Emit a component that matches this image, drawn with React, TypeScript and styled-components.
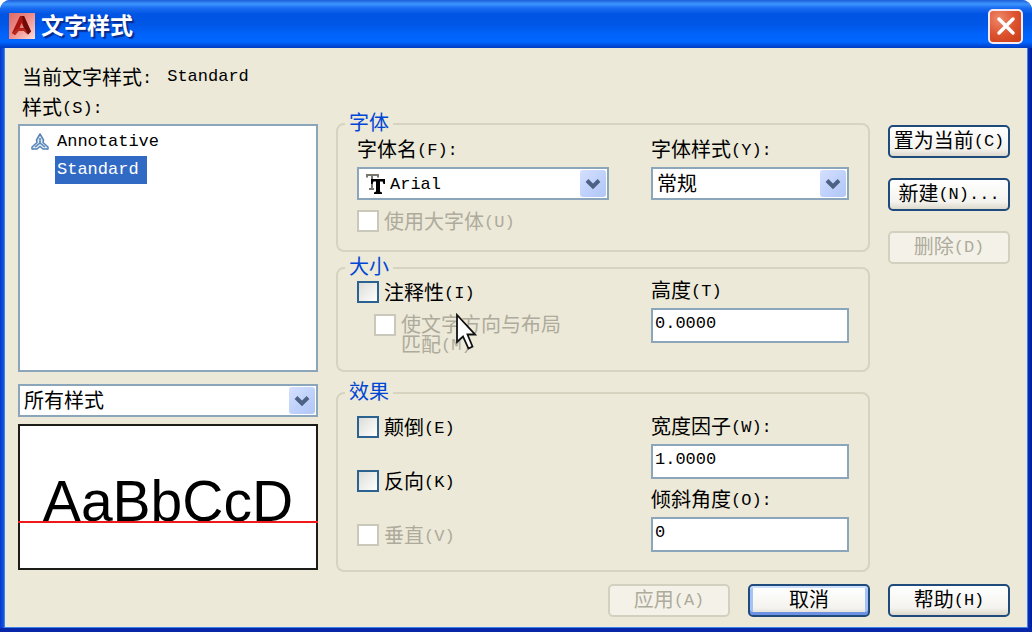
import React from "react";
import styled, { createGlobalStyle, css } from "styled-components";

const cjk = `"Noto Sans CJK SC", sans-serif`;
const mono = `"Liberation Mono", "Noto Sans CJK SC", monospace`;

const GlobalStyle = createGlobalStyle`
  *, *::before, *::after { box-sizing: border-box; }
  body { margin: 0; background: #fff; color: #000; font: 20px/20px ${cjk}; }
  button, input, select { font: inherit; color: inherit; margin: 0; }
`;

const Window = styled.main`
  display: flex;
  flex-direction: column;
  min-height: 100vh;
  padding: 0 4px 4px;
  border-radius: 10px 10px 0 0;
  background: linear-gradient(90deg, #0636cc, #1258e4 4px, #1258e4 calc(100% - 5px), #0a2fc0 calc(100% - 4px), #001a96);
  box-shadow: inset 0 -4px 0 #0826a8;
`;

const TitleBar = styled.header`
  display: flex;
  align-items: center;
  gap: 6px;
  height: 48px;
  margin: 0 -4px;
  padding: 4px 9px 0;
  border-radius: 10px 10px 0 0;
  background: linear-gradient(
    #1c5ed8 0, #3d95ff 4px, #1a6cf0 8px, #0054e3 14px, #0056e6 24px,
    #0062fa 34px, #0066ff 42px, #0050e0 45px, #003cc0 48px
  );
`;

const Title = styled.h1`
  flex: 1;
  margin: 0;
  color: #fff;
  font-size: 23px;
  line-height: 24px;
  padding-bottom: 4px;
  font-weight: 700;
  text-shadow: 2px 2px 1px #0a2a8c;
`;

const CloseButton = styled.button`
  display: grid;
  place-items: center;
  width: 35px;
  height: 35px;
  padding: 0;
  border: 2px solid #f4ebf4;
  border-radius: 5px;
  background: radial-gradient(circle at 30% 25%, #ee8a6c, #de5330 50%, #c63c14);
`;

const Body = styled.form`
  flex: 1;
  display: flex;
  flex-direction: column;
  padding: 14px 17px 10px 13px;
  border: solid #3b82ea;
  border-width: 0 1px 1px;
  background: #ece9d8;
`;

const Current = styled.p`
  display: flex;
  gap: 15px;
  margin: 0;
  padding-left: 4px;
  line-height: 30px;
`;

const Latin = styled.span`
  font-family: ${mono};
  font-size: 17px;
  line-height: 0;
  vertical-align: 2px;
`;

const CurrentName = styled.span`
  font-family: ${mono};
  font-size: 17px;
`;

const Columns = styled.div`
  display: grid;
  grid-template-columns: 300px minmax(0, 1fr) 122px;
  column-gap: 18px;
`;

const StyleColumn = styled.section`
  display: flex;
  flex-direction: column;
`;

const ListCaption = styled.h2`
  margin: 0 0 2px;
  padding-left: 4px;
  font-size: 20px;
  font-weight: 400;
  line-height: 30px;
`;

const field = css`
  border: 2px solid #8ba5bb;
  background: #fff;
`;

const StyleList = styled.ul`
  ${field}
  height: 248px;
  margin: 0 0 12px;
  padding: 2px 11px;
  list-style: none;
`;

const StyleItem = styled.li`
  display: grid;
  grid-template-columns: 20px auto;
  justify-content: start;
  align-items: center;
  column-gap: 4px;
  height: 28px;
`;

const StyleName = styled.button<{ $selected?: boolean }>`
  grid-column: 2;
  height: 28px;
  padding: 0 8px 0 2px;
  border: 0;
  font-family: ${mono};
  font-size: 17px;
  background: ${(p) => (p.$selected ? "#316ac5" : "transparent")};
  color: ${(p) => (p.$selected ? "#fff" : "#000")};
`;

const Combo = styled.div`
  ${field}
  position: relative;
  display: flex;
  align-items: center;
  gap: 5px;
  height: 33px;
  padding-left: 4px;
`;

const ComboSelect = styled.select<{ $latin?: boolean }>`
  flex: 1;
  min-width: 0;
  height: 29px;
  padding: ${(p) => (p.$latin ? "2px 30px 0 0" : "0 30px 2px 0")};
  border: 0;
  outline: 0;
  appearance: none;
  background: transparent;
  font-family: ${(p) => (p.$latin ? mono : cjk)};
  font-size: ${(p) => (p.$latin ? "17px" : "20px")};
`;

const Arrow = styled.span`
  position: absolute;
  top: 1px;
  right: 1px;
  display: grid;
  place-items: center;
  width: 26px;
  height: 27px;
  border-radius: 3px;
  background: linear-gradient(135deg, #d5e0fd, #bdd0fb 60%, #b2c6f5);
  pointer-events: none;
`;

const Preview = styled.div`
  position: relative;
  height: 146px;
  margin-top: 7px;
  padding-top: 47px;
  border: 2px solid #1c1c18;
  background: #fff;
  font: 57px/57px "Liberation Sans", Arial, sans-serif;
  font-kerning: none;
  text-align: center;
`;

const Baseline = styled.span`
  position: absolute;
  top: 95px;
  left: -2px;
  right: -2px;
  height: 2px;
  background: #f01818;
`;

const Groups = styled.div`
  display: flex;
  flex-direction: column;
  padding-top: 20px;
`;

const Group = styled.fieldset<{ $top: number; $bottom: number; $gap: number }>`
  min-width: 0;
  margin: 0 0 ${(p) => p.$gap}px;
  padding: ${(p) => p.$top}px 19px ${(p) => p.$bottom}px;
  border: 2px solid #d6d4c0;
  border-radius: 8px;
`;

const Legend = styled.legend`
  margin-left: -12px;
  padding: 0 4px 4px;
  color: #0046d5;
`;

const Split = styled.div`
  display: grid;
  grid-template-columns: minmax(0, 1fr) 198px;
  column-gap: 42px;
`;

const Stack = styled.div<{ $gap: number; $top?: number }>`
  display: flex;
  flex-direction: column;
  gap: ${(p) => p.$gap}px;
  padding-top: ${(p) => p.$top ?? 0}px;
`;

const Field = styled.div`
  display: flex;
  flex-direction: column;
  gap: 8px;
`;

const TextInput = styled.input`
  ${field}
  width: 100%;
  height: 35px;
  padding: 0 2px 4px;
  font-family: ${mono};
  font-size: 17px;
`;

const CheckLabel = styled.label<{ $off?: boolean; $nested?: boolean }>`
  position: relative;
  display: flex;
  gap: 5px;
  padding-left: ${(p) => (p.$nested ? 17 : 0)}px;
  line-height: ${(p) => (p.$nested ? 20 : 22)}px;
  color: ${(p) => (p.$off ? "#aeab9c" : "#000")};
`;

const Check = styled.input.attrs({ type: "checkbox" })`
  flex: none;
  appearance: none;
  width: 22px;
  height: 22px;
  border: 2px solid #2c628f;
  background: linear-gradient(135deg, #dcdcd7, #fff);

  &:disabled {
    border-color: #cac8bb;
    background: #fff;
  }
`;

const Pointer = styled.svg`
  position: absolute;
  left: 98px;
  top: -1px;
`;

const Actions = styled.div`
  display: flex;
  flex-direction: column;
  gap: 20px;
  padding-top: 33px;
`;

const Footer = styled.footer`
  display: flex;
  justify-content: flex-end;
  gap: 18px;
  margin-top: 12px;
`;

const PushButton = styled.button<{ $primary?: boolean }>`
  width: 122px;
  height: 33px;
  padding: 0 0 3px;
  border: 2px solid #1f4a7c;
  border-radius: 5px;
  background: linear-gradient(#fff, #f4f3ee 75%, #dcd8cc);
  white-space: nowrap;
  box-shadow: ${(p) => (p.$primary ? "inset 0 2px #cfe0fd, inset 0 -3px #6d92e4, inset 3px 0 #a5c1f5, inset -3px 0 #a5c1f5" : "none")};

  &:disabled {
    border-color: #d2d0bf;
    background: #f4f2e8;
    color: #aeab9c;
  }
`;

function Chevron() {
  return (
    <Arrow aria-hidden="true">
      <svg width="16" height="12" viewBox="0 0 16 12" fill="none" stroke="#4d6185" strokeWidth="4">
        <path d="M2 2.5 8 8.5 14 2.5" />
      </svg>
    </Arrow>
  );
}

function AppIcon() {
  return (
    <svg width="26" height="26" viewBox="0 0 26 26" aria-hidden="true">
      <defs>
        <linearGradient id="tile" x1="0" y1="0" x2="1" y2="1">
          <stop offset="0" stopColor="#d96a68" />
          <stop offset="0.5" stopColor="#f08f8b" />
          <stop offset="1" stopColor="#fbe0de" />
        </linearGradient>
      </defs>
      <rect width="26" height="26" fill="url(#tile)" />
      <path d="M11 3h4l7 15.500-3 3-4-3.500H9.500L6 22l-3-2Z" fill="#a81510" />
      <path d="M13 3h2l7 15.500-3 3-4-4.500Z" fill="#6e0b08" />
      <path d="M12.500 10 10.500 15h4.500Z" fill="#e68078" />
      <path d="M3 20 9 15.500h7l3 6-4-3.500H9.500L6 22Z" fill="#b8281e" />
    </svg>
  );
}

function AnnotativeIcon() {
  return (
    <svg width="18" height="18" viewBox="0 0 18 18" fill="#dceaf6" stroke="#5683b4" strokeWidth="1.500" strokeLinejoin="round" aria-hidden="true">
      <path d="M9 1 12.500 7 12 9.500 17 14V16H12L9 13.500 6 16H1V14L6 9.500 5.500 7Z" />
      <path d="M9 5V10M9 10 4 14M9 10 14 14" fill="none" />
    </svg>
  );
}

function TrueTypeIcon() {
  return (
    <svg width="22" height="22" viewBox="0 0 22 22" aria-hidden="true">
      <path d="M4 4.500V2H15V4.500M9 2V16M6 16H11" fill="none" stroke="#77776f" strokeWidth="2" />
      <path d="M8 6H22V11H20.500L19.500 8.500H17V18.500L19 19.500V21H11V19.500L13 18.500V8.500H10.500L9.500 11H8Z" fill="#000" />
    </svg>
  );
}

function Key({ children }: { children: string }) {
  return <Latin>{children}</Latin>;
}

export default function App() {
  return (
    <>
      <GlobalStyle />
      <Window>
        <TitleBar>
          <AppIcon />
          <Title>文字样式</Title>
          <CloseButton type="button" aria-label="关闭">
            <svg width="20" height="20" viewBox="0 0 20 20" stroke="#fff" strokeWidth="3.500" strokeLinecap="round">
              <path d="M3 3 17 17M17 3 3 17" />
            </svg>
          </CloseButton>
        </TitleBar>
        <Body onSubmit={(e) => e.preventDefault()}>
          <Current>
            <span>当前文字样式<Key>:</Key></span>
            <CurrentName>Standard</CurrentName>
          </Current>
          <Columns>
            <StyleColumn>
              <ListCaption id="styles">样式<Key>(S):</Key></ListCaption>
              <StyleList aria-labelledby="styles">
                <StyleItem>
                  <AnnotativeIcon />
                  <StyleName type="button">Annotative</StyleName>
                </StyleItem>
                <StyleItem>
                  <StyleName type="button" $selected aria-pressed="true">Standard</StyleName>
                </StyleItem>
              </StyleList>
              <Combo>
                <ComboSelect aria-label="样式过滤">
                  <option>所有样式</option>
                </ComboSelect>
                <Chevron />
              </Combo>
              <Preview>
                AaBbCcD
                <Baseline />
              </Preview>
            </StyleColumn>

            <Groups>
              <Group $top={3} $bottom={18} $gap={4}>
                <Legend>字体</Legend>
                <Split>
                  <Stack $gap={10}>
                    <Field>
                      <label htmlFor="font-name">字体名<Key>(F):</Key></label>
                      <Combo>
                        <TrueTypeIcon />
                        <ComboSelect id="font-name" $latin>
                          <option>Arial</option>
                        </ComboSelect>
                        <Chevron />
                      </Combo>
                    </Field>
                    <CheckLabel $off>
                      <Check disabled />
                      <span>使用大字体<Key>(U)</Key></span>
                    </CheckLabel>
                  </Stack>
                  <Field>
                    <label htmlFor="font-style">字体样式<Key>(Y):</Key></label>
                    <Combo>
                      <ComboSelect id="font-style">
                        <option>常规</option>
                      </ComboSelect>
                      <Chevron />
                    </Combo>
                  </Field>
                </Split>
              </Group>

              <Group $top={0} $bottom={16} $gap={9}>
                <Legend>大小</Legend>
                <Split>
                  <Stack $gap={11} $top={1}>
                    <CheckLabel>
                      <Check />
                      <span>注释性<Key>(I)</Key></span>
                    </CheckLabel>
                    <CheckLabel $off $nested>
                      <Check disabled />
                      <span>使文字方向与布局<br />匹配<Key>(M)</Key></span>
                      <Pointer width="22" height="38" viewBox="0 0 22 38" aria-hidden="true">
                        <path d="M2 2V29L8 23.500 13.500 35.500 17.500 33.500 12.500 21.500H20Z" fill="#fff" stroke="#111" strokeWidth="1.800" />
                      </Pointer>
                    </CheckLabel>
                  </Stack>
                  <Field>
                    <label htmlFor="height">高度<Key>(T)</Key></label>
                    <TextInput id="height" defaultValue="0.0000" />
                  </Field>
                </Split>
              </Group>

              <Group $top={11} $bottom={18} $gap={0}>
                <Legend>效果</Legend>
                <Split>
                  <Stack $gap={32}>
                    <CheckLabel>
                      <Check />
                      <span>颠倒<Key>(E)</Key></span>
                    </CheckLabel>
                    <CheckLabel>
                      <Check />
                      <span>反向<Key>(K)</Key></span>
                    </CheckLabel>
                    <CheckLabel $off>
                      <Check disabled />
                      <span>垂直<Key>(V)</Key></span>
                    </CheckLabel>
                  </Stack>
                  <Stack $gap={10}>
                    <Field>
                      <label htmlFor="width-factor">宽度因子<Key>(W):</Key></label>
                      <TextInput id="width-factor" defaultValue="1.0000" />
                    </Field>
                    <Field>
                      <label htmlFor="oblique">倾斜角度<Key>(O):</Key></label>
                      <TextInput id="oblique" defaultValue="0" />
                    </Field>
                  </Stack>
                </Split>
              </Group>
            </Groups>

            <Actions>
              <PushButton type="button">置为当前<Key>(C)</Key></PushButton>
              <PushButton type="button">新建<Key>(N)...</Key></PushButton>
              <PushButton type="button" disabled>删除<Key>(D)</Key></PushButton>
            </Actions>
          </Columns>
          <Footer>
            <PushButton type="submit" disabled>应用<Key>(A)</Key></PushButton>
            <PushButton type="button" $primary>取消</PushButton>
            <PushButton type="button">帮助<Key>(H)</Key></PushButton>
          </Footer>
        </Body>
      </Window>
    </>
  );
}
